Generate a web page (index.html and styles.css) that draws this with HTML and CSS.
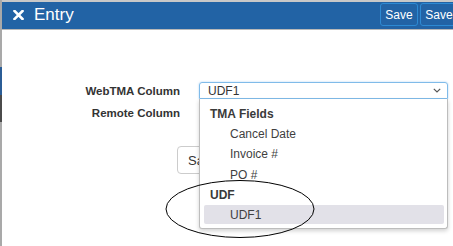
FILE: index.html
```html
<!DOCTYPE html>
<html lang="en">
<head>
  <meta charset="UTF-8" />
  <meta name="viewport" content="width=device-width, initial-scale=1.0" />
  <title>Entry</title>
  <link rel="stylesheet" href="styles.css">
</head>

<body>
<div class="frame">
  <!-- page behind the dialog, only its left edge shows -->
  <div class="edge">
    <div class="edge-part edge-gray edge-top"></div>
    <div class="edge-part edge-blue"></div>
    <div class="edge-part edge-dark"></div>
    <div class="edge-part edge-gray edge-rest"></div>
  </div>

  <div class="dialog">
    <header class="dialog-header">
      <svg class="close-icon" width="11" height="10" viewBox="0 0 11 10">
        <path d="M1.5 1 L9.5 9 M9.5 1 L1.5 9" stroke="#fff" stroke-width="2.6" stroke-linecap="square" />
      </svg>
      <span class="dialog-title">Entry</span>
      <div class="header-actions">
        <button class="header-btn">Save</button>
        <button class="header-btn">Save</button>
      </div>
    </header>

    <main class="dialog-body">
      <form class="mapping-form" onsubmit="event.preventDefault();">
        <label class="field-label" for="webtma-column">WebTMA Column</label>
        <div class="select-wrap">
          <div class="fake-select is-open" id="webtma-column">
            <span>UDF1</span>
            <svg class="chevron" width="8" height="5" viewBox="0 0 8 5">
              <path d="M0.8 0.8 L4 4 L7.2 0.8" fill="none" stroke="#555" stroke-width="1.2" />
            </svg>
          </div>

          <!-- Open dropdown list -->
          <ul class="dropdown">
            <li class="group-title">TMA Fields</li>
            <li class="option">Cancel Date</li>
            <li class="option">Invoice #</li>
            <li class="option">PO #</li>
            <li class="group-title">UDF</li>
            <li class="option is-selected">UDF1</li>
          </ul>
        </div>

        <label class="field-label" for="remote-column">Remote Column</label>
        <div class="select-wrap">
          <div class="fake-select" id="remote-column"><span></span></div>
        </div>

        <div class="form-actions">
          <button type="submit" class="form-btn">Save</button>
        </div>
      </form>
    </main>
  </div>
</div>

<!-- hand-drawn annotation circle -->
<svg class="annotation" width="153" height="62" viewBox="0 0 153 62">
  <ellipse cx="76" cy="30" rx="74" ry="28.5" fill="none" stroke="#000" stroke-width="1" />
</svg>
</body>
</html>
```

FILE: styles.css
```css
html,
body {
  margin: 0;
  padding: 0;
}

body {
  width: 453px;
  height: 246px;
  overflow: hidden;
  position: relative;
  background-color: #ffffff;
  font-family: "Liberation Sans", Arial, sans-serif;
  color: #333333;
}

.frame {
  display: flex;
  height: 246px;
}

.edge {
  width: 2px;
  display: flex;
  flex-direction: column;
}

.edge-top {
  height: 67px;
}

.edge-gray {
  background-color: #a9a9a9;
}

.edge-blue {
  height: 28px;
  background-color: #2b5d96;
}

.edge-dark {
  height: 27px;
  background-color: #4b4b4b;
}

.edge-rest {
  flex: 1;
}

.dialog {
  flex: 1;
  border-top: 2px solid #c8c8c8;
  overflow: hidden;
}

.dialog-header {
  height: 27px;
  background-color: #2263a5;
  border-bottom: 1px solid #b8b8b8;
  display: flex;
  align-items: center;
  padding-left: 11px;
  color: #ffffff;
}

.close-icon {
  flex-shrink: 0;
  margin-top: -1px;
}

.dialog-title {
  font-size: 17px;
  margin-left: 10px;
  margin-top: -1px;
}

.header-actions {
  display: flex;
  gap: 2px;
  margin-left: auto;
  margin-right: -5px;
  align-self: flex-start;
  padding-top: 1px;
}

.header-btn {
  width: 38px;
  height: 23px;
  padding: 0;
  border: 1px solid #2d8ad3;
  border-radius: 3px;
  background-color: #2263a5;
  color: #ffffff;
  font-family: "Liberation Sans", Arial, sans-serif;
  font-size: 12px;
}

.dialog-body {
  padding-top: 52px;
}

.mapping-form {
  display: grid;
  grid-template-columns: 178px 249px;
  column-gap: 19px;
  row-gap: 5px;
  align-items: center;
}

.field-label {
  justify-self: end;
  font-size: 11.5px;
  font-weight: bold;
  color: #333333;
}

.select-wrap {
  position: relative;
}

.fake-select {
  height: 15px;
  border: 1px solid #c9c9c9;
  border-radius: 3px;
  display: flex;
  align-items: center;
  padding: 0 8px;
  font-size: 12px;
  color: #333333;
}

.fake-select.is-open {
  border-color: #80bbe9;
  box-shadow: 0 0 2px rgba(102, 175, 233, 0.6);
  border-radius: 3px 3px 0 0;
}

.chevron {
  margin-left: auto;
  margin-right: -2px;
}

.dropdown {
  position: absolute;
  top: 17px;
  left: 0;
  width: 240px;
  margin: 0;
  padding: 5px 3px 4px 4px;
  list-style: none;
  background-color: #ffffff;
  border: 1px solid #bdbdbd;
  border-top: none;
  border-radius: 0 0 3px 3px;
  box-shadow: 0 2px 4px rgba(0, 0, 0, 0.18);
  z-index: 2;
}

.dropdown li {
  height: 20.2px;
  line-height: 20.2px;
  font-size: 12px;
  white-space: nowrap;
}

.group-title {
  padding-left: 6px;
  font-weight: bold;
  font-size: 12.5px;
  color: #3a3a3a;
}

.option {
  padding-left: 26px;
  color: #3f3f3f;
}

.dropdown .option.is-selected {
  background-color: #e2e1e8;
  border-radius: 2px;
  height: 19px;
  line-height: 20px;
}

.form-actions {
  grid-column: 1 / 3;
  padding-left: 175px;
  padding-top: 20px;
}

.form-btn {
  height: 28px;
  width: 60px;
  padding: 0 10px;
  text-align: left;
  border: 1px solid #cccccc;
  border-radius: 4px;
  background-color: #ffffff;
  color: #333333;
  font-family: "Liberation Sans", Arial, sans-serif;
  font-size: 13px;
}

.annotation {
  position: absolute;
  left: 164px;
  top: 179px;
  z-index: 3;
}
```
